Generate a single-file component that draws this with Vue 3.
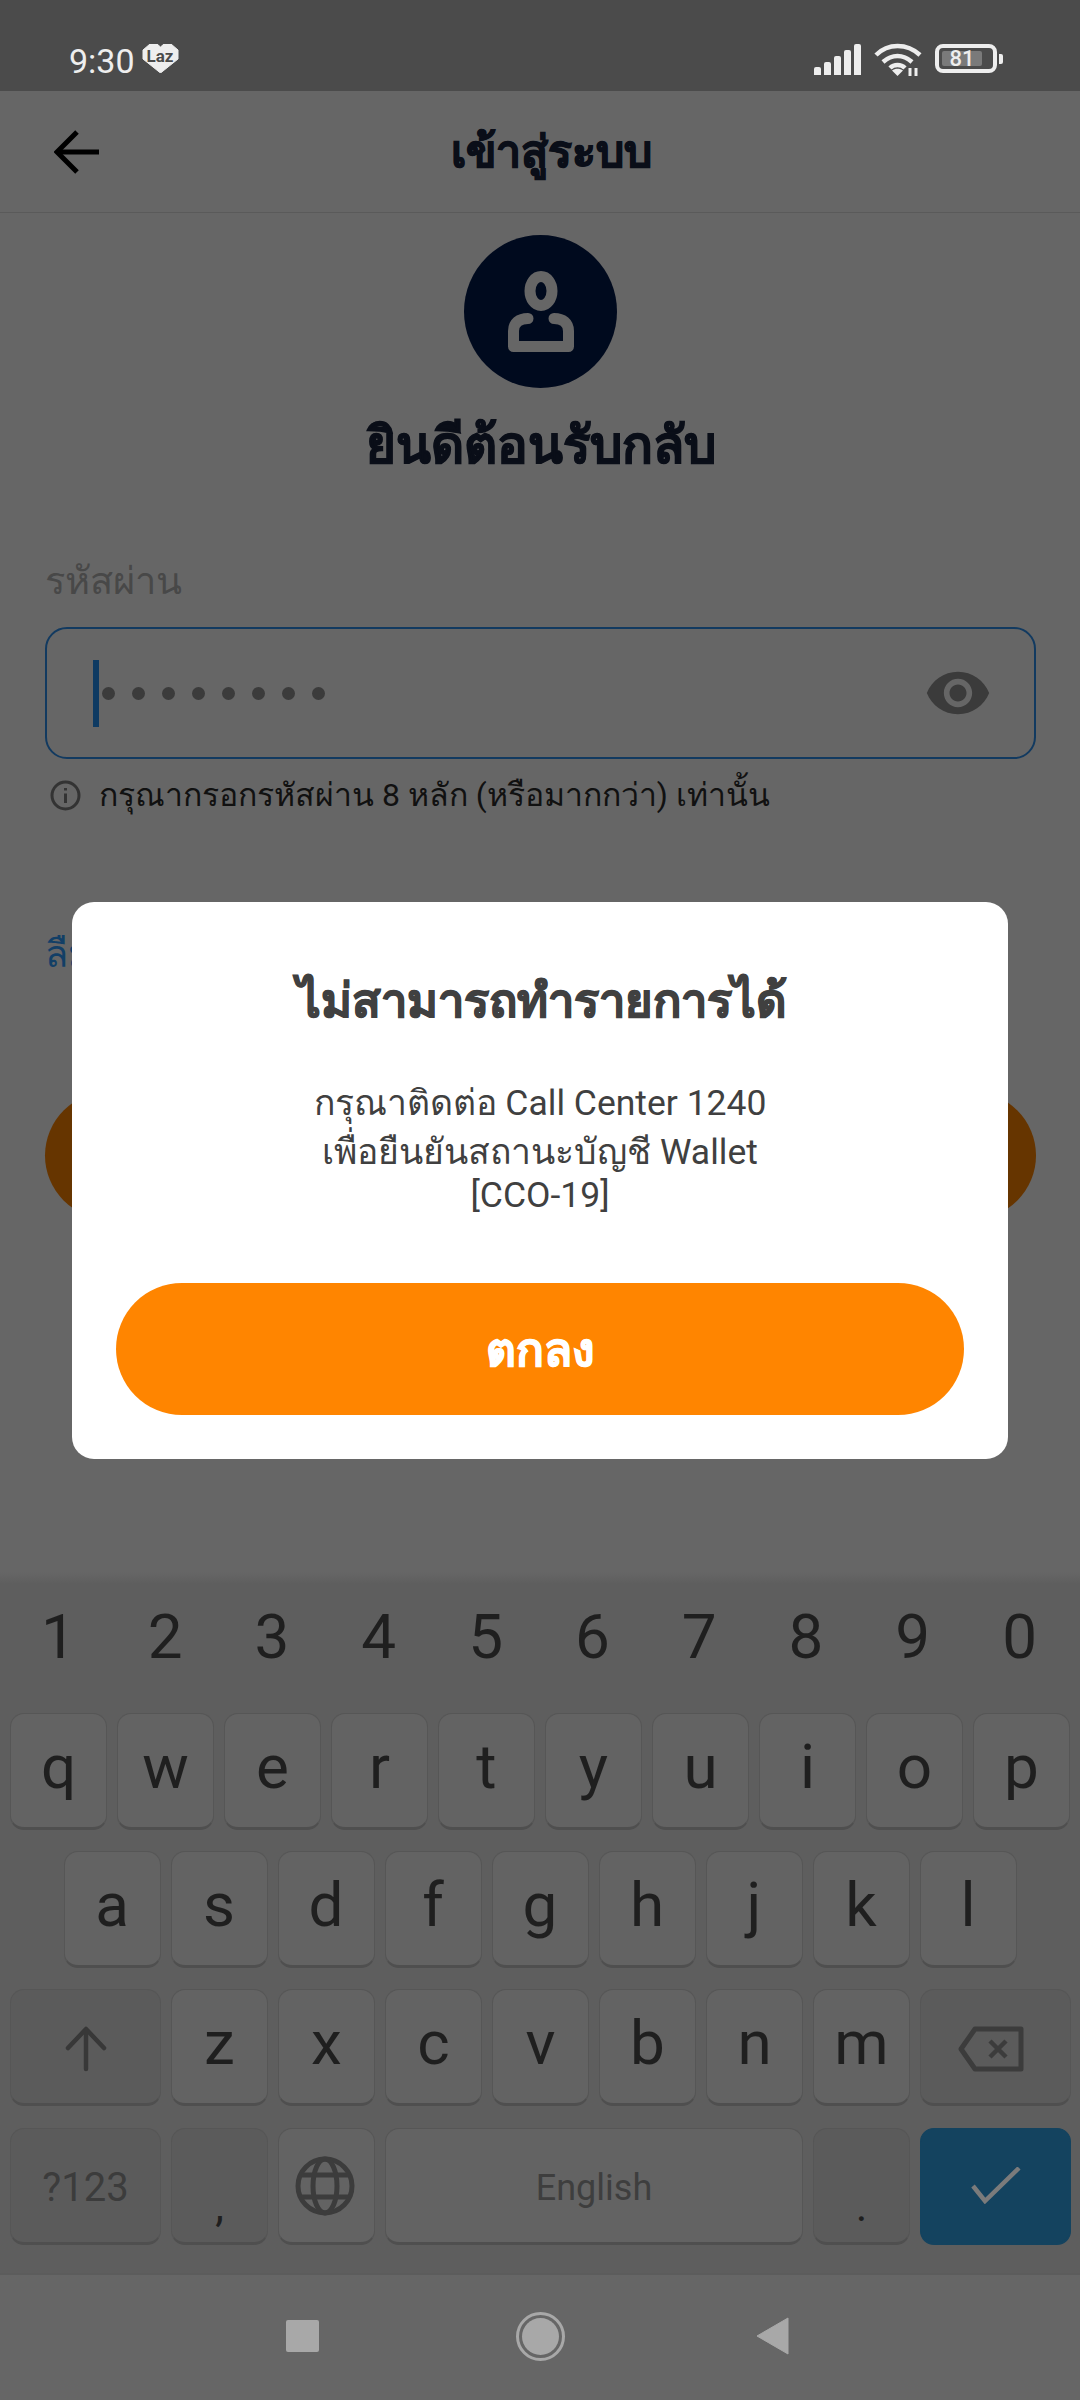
<template>
  <div class="screen">
    <div class="status-bar">
      <div class="status-left">
        <span class="time">9:30</span>
        <div class="laz">
          <svg width="37" height="29" viewBox="0 0 37 29"><path d="M1 6 L8 0 L15 0 L18.5 3 L22 0 L29 0 L36 6 V15 L18.5 29 L1 15 Z" fill="#eee" stroke="#eee" stroke-linejoin="round" /></svg>
          <span>Laz</span>
        </div>
      </div>
      <div class="status-right">
        <div class="signal">
          <i v-for="h in signalBars" :key="h" :style="{ height: h + 'px' }"></i>
        </div>
        <svg class="wifi" width="48" height="33" viewBox="0 0 48 33" fill="none" stroke="#eee" stroke-width="4.5">
          <path d="M2 12 C14 0 33 0 46 12" />
          <path d="M9 19 C18 11 29 11 38 19" />
          <path d="M16 25 C20 21 27 21 31 25" />
          <path d="M23.5 33 L18 27.5 C21 25 26 25 29 27.5 Z" fill="#eee" stroke="none" />
          <path d="M36 33 V25 M42 33 V25" stroke-width="3" />
        </svg>
        <div class="battery">
          <div class="battery-body">
            <div class="battery-fill"><span>81</span></div>
          </div>
          <div class="battery-tip"></div>
        </div>
      </div>
    </div>

    <header class="app-bar">
      <svg class="back" width="46" height="44" viewBox="0 0 46 44" fill="none" stroke="#000" stroke-width="5">
        <path d="M23 2 L3 22 L23 42" />
        <path d="M3 22 H45" />
      </svg>
      <h1>เข้าสู่ระบบ</h1>
    </header>

    <main class="content">
      <div class="avatar">
        <svg width="66" height="81" viewBox="0 0 66 81" fill="none" stroke="#666" stroke-width="11" stroke-linecap="round" stroke-linejoin="round">
          <ellipse cx="33" cy="20" rx="11" ry="14.5" />
          <path d="M20 47.5 C11 47.5 5.5 52 5.5 60 V75.5 H60.5 V60 C60.5 52 55 47.5 46 47.5" />
        </svg>
      </div>
      <h2 class="welcome">ยินดีต้อนรับกลับ</h2>

      <label class="field-label">รหัสผ่าน</label>
      <div class="field">
        <span class="caret"></span>
        <div class="dots">
          <i v-for="n in 8" :key="n"></i>
        </div>
        <svg class="eye" width="68" height="68" viewBox="0 0 24 24" fill="#3b3b3b">
          <path d="M12 4.5C7 4.5 2.73 7.61 1 12c1.73 4.39 6 7.5 11 7.5s9.27-3.11 11-7.5c-1.73-4.39-6-7.5-11-7.5zM12 17c-2.76 0-5-2.24-5-5s2.24-5 5-5 5 2.24 5 5-2.24 5-5 5zm0-8c-1.66 0-3 1.34-3 3s1.34 3 3 3 3-1.34 3-3-1.34-3-3-3z" />
        </svg>
      </div>
      <div class="hint">
        <svg width="31" height="31" viewBox="0 0 31 31" fill="none" stroke="#333" stroke-width="3">
          <circle cx="15.5" cy="15.5" r="13.5" />
          <path d="M15.5 13.5 V23" />
          <path d="M15.5 8 V10.5" />
        </svg>
        <span>กรุณากรอกรหัสผ่าน 8 หลัก (หรือมากกว่า) เท่านั้น</span>
      </div>

      <a class="forgot">ลืมรหัสผ่าน?</a>
      <div class="submit"></div>
    </main>

    <section class="keyboard">
      <div class="digits">
        <span v-for="d in digits" :key="d">{{ d }}</span>
      </div>
      <div class="key-row">
        <div v-for="k in row1" :key="k" class="key">{{ k }}</div>
      </div>
      <div class="key-row key-row--center">
        <div v-for="k in row2" :key="k" class="key">{{ k }}</div>
      </div>
      <div class="key-row key-row--third">
        <div class="key key--wide key--fn">
          <svg class="icon-shift" width="42" height="46" viewBox="0 0 42 46" fill="none" stroke="#383838" stroke-width="4.5" stroke-linecap="round" stroke-linejoin="round">
            <path d="M3 22 L21 3 L39 22" />
            <path d="M21 4 V43" />
          </svg>
        </div>
        <div v-for="k in row3" :key="k" class="key">{{ k }}</div>
        <div class="key key--wide key--fn">
          <svg class="icon-back" width="66" height="46" viewBox="0 0 66 46" fill="none" stroke="#3c3c3c" stroke-width="5" stroke-linejoin="round">
            <path d="M17 3 H63 V43 H17 L3 23 Z" />
            <path d="M32 15 L48 31 M48 15 L32 31" stroke-width="4.5" />
          </svg>
        </div>
      </div>
      <div class="key-row">
        <div class="key key--wide key--fn key--sym">?123</div>
        <div class="key key--fn key--punct">,</div>
        <div class="key key--plain">
          <svg class="icon-globe" width="60" height="60" viewBox="0 0 60 60" fill="none" stroke="#3c3c3c" stroke-width="5">
            <circle cx="30" cy="30" r="27" />
            <ellipse cx="30" cy="30" rx="12" ry="27" />
            <path d="M7 19 H53 M7 41 H53" />
          </svg>
        </div>
        <div class="key key--space key--plain">English</div>
        <div class="key key--fn key--punct">.</div>
        <div class="key key--wide key--enter key--plain">
          <svg width="50" height="37" viewBox="0 0 50 37" fill="none" stroke="#7b7b7b" stroke-width="4.5">
            <path d="M2 19 L14 34 L48 1" />
          </svg>
        </div>
      </div>
    </section>

    <nav class="nav-bar">
      <span class="nav-square"></span>
      <span class="nav-home"><i></i></span>
      <svg width="34" height="38" viewBox="0 0 34 38"><path d="M33 1 V37 L2 19 Z" fill="#a8a8a8" stroke="#a8a8a8" stroke-linejoin="round" /></svg>
    </nav>

    <div class="overlay">
      <div class="dialog">
        <h3>ไม่สามารถทำรายการได้</h3>
        <p class="line line--first">กรุณาติดต่อ Call Center 1240</p>
        <p class="line line--second">เพื่อยืนยันสถานะบัญชี Wallet</p>
        <p class="line line--third">[CCO-19]</p>
        <button class="ok">ตกลง</button>
      </div>
    </div>
  </div>
</template>

<script setup>
const signalBars = [8, 13, 19, 25, 31]
const digits = ['1', '2', '3', '4', '5', '6', '7', '8', '9', '0']
const row1 = ['q', 'w', 'e', 'r', 't', 'y', 'u', 'i', 'o', 'p']
const row2 = ['a', 's', 'd', 'f', 'g', 'h', 'j', 'k', 'l']
const row3 = ['z', 'x', 'c', 'v', 'b', 'n', 'm']
</script>

<style scoped>
.screen {
  position: relative;
  width: 1080px;
  height: 2400px;
  display: flex;
  flex-direction: column;
  overflow: hidden;
  background: #666;
  font-family: Roboto, "Noto Sans", "Liberation Sans", sans-serif;
}

.status-bar {
  height: 91px;
  flex: none;
  background: #4b4b4b;
  display: flex;
  justify-content: space-between;
  padding: 43px 77px 0 69px;
  box-sizing: border-box;
  color: #eee;
}
.status-left {
  display: flex;
  align-items: flex-start;
  gap: 7px;
}
.time {
  font-size: 34px;
  line-height: 36px;
}
.laz {
  position: relative;
  width: 37px;
  height: 29px;
  margin-top: 1px;
}
.laz span {
  position: absolute;
  top: 2px;
  left: 0;
  width: 37px;
  text-align: center;
  font-size: 17px;
  line-height: 20px;
  font-weight: 700;
  color: #4b4b4b;
}
.status-right {
  display: flex;
  align-items: flex-start;
  gap: 13px;
}
.signal {
  display: flex;
  align-items: flex-end;
  gap: 3px;
  height: 31px;
  margin-top: 1px;
}
.signal i {
  width: 7px;
  background: #eee;
  border-radius: 2px 2px 0 0;
}
.battery {
  display: flex;
  align-items: center;
  gap: 2px;
  margin-top: 1px;
}
.battery-body {
  width: 62px;
  height: 29px;
  border: 4px solid #eee;
  border-radius: 8px;
  box-sizing: border-box;
  padding: 3px;
}
.battery-fill {
  width: 40px;
  height: 15px;
  background: #7a7a7a;
  border-radius: 2px;
  display: flex;
  align-items: center;
  justify-content: center;
  font-size: 22px;
  font-weight: 500;
  color: #eee;
}
.battery-tip {
  width: 4px;
  height: 10px;
  background: #eee;
  border-radius: 0 2px 2px 0;
}

.app-bar {
  position: relative;
  height: 122px;
  flex: none;
  box-sizing: border-box;
  border-bottom: 1px solid #5a5a5a;
  display: flex;
  align-items: center;
  justify-content: center;
}
.app-bar .back {
  position: absolute;
  left: 54px;
  top: 39px;
}
.app-bar h1 {
  margin: 0 0 0 22px;
  font-size: 44.5px;
  font-weight: 700;
  color: #0a0e18;
  -webkit-text-stroke: 1px #0a0e18;
}

.content {
  flex: 1;
  display: flex;
  flex-direction: column;
  align-items: stretch;
  padding: 22px 44px 0 45px;
}
.avatar {
  width: 153px;
  height: 153px;
  border-radius: 50%;
  background: #000a1e;
  align-self: center;
  display: flex;
  align-items: center;
  justify-content: center;
}
.welcome {
  margin: 23px 0 0;
  text-align: center;
  font-size: 51px;
  line-height: 70px;
  font-weight: 700;
  color: #0a0e18;
  -webkit-text-stroke: 1px #0a0e18;
}
.field-label {
  margin-top: 75px;
  font-size: 38px;
  line-height: 50px;
  color: #484848;
}
.field {
  margin-top: 21px;
  height: 132px;
  box-sizing: border-box;
  border: 2px solid #123a60;
  border-radius: 22px;
  display: flex;
  align-items: center;
  padding: 0 42px 0 46px;
}
.caret {
  width: 6px;
  height: 67px;
  background: #0e3a62;
}
.dots {
  flex: 1;
  display: flex;
  gap: 17px;
  margin-left: 3px;
}
.dots i {
  width: 13px;
  height: 13px;
  border-radius: 50%;
  background: #3b3b3b;
}
.hint {
  margin-top: 16px;
  padding-left: 5px;
  display: flex;
  align-items: center;
  gap: 18px;
  font-size: 32px;
  line-height: 40px;
  color: #111;
}
.forgot {
  margin-top: 114px;
  font-size: 38px;
  line-height: 50px;
  color: #123f66;
}
.submit {
  margin-top: 113px;
  height: 127px;
  border-radius: 64px;
  background: #663500;
}

.keyboard {
  flex: none;
  height: 701px;
  box-sizing: border-box;
  padding: 0 10px;
  background: linear-gradient(#666 0, #5e5e5e 12px);
}
.digits {
  height: 141px;
  display: flex;
  margin-left: -5px;
  padding-top: 29px;
  box-sizing: border-box;
}
.digits span {
  width: 106.8px;
  flex: none;
  text-align: center;
  font-size: 62px;
  line-height: 72px;
  color: #1f1f1f;
}
.key-row {
  display: flex;
  gap: 10px;
  margin-bottom: 21px;
}
.key-row--center {
  justify-content: center;
}
.key-row--third {
  margin-bottom: 22px;
}
.key {
  flex: none;
  width: 97px;
  height: 117px;
  box-sizing: border-box;
  padding-bottom: 8px;
  background: #636363;
  border: 1px solid #565656;
  border-bottom: 3px solid #4f4f4f;
  border-radius: 14px;
  display: flex;
  align-items: center;
  justify-content: center;
  font-size: 62px;
  color: #1f1f1f;
}
.key--wide {
  width: 151px;
}
.key--fn {
  background: #5b5b5b;
}
.key--plain {
  padding-bottom: 0;
}
.key--sym {
  font-size: 40px;
  padding-bottom: 0;
  padding-top: 4px;
  color: #3c3c3c;
}
.key--punct {
  font-size: 44px;
  padding-top: 40px;
  padding-bottom: 0;
  color: #1f1f1f;
}
.key--space {
  width: 418px;
  font-size: 36px;
  padding-top: 4px;
  color: #3e3e3e;
}
.key--enter {
  background: #14435f;
  border-color: #14435f;
}
.icon-shift {
  margin-top: 13px;
}
.icon-back {
  margin: 12px 10px 0 0;
}
.icon-globe {
  margin-right: 3px;
}

.nav-bar {
  flex: none;
  height: 127px;
  background: #666;
  position: relative;
  display: flex;
  align-items: center;
  padding-left: 286px;
  padding-bottom: 3px;
  box-sizing: border-box;
  border-top: 2px solid #5c5c5c;
}
.nav-square {
  width: 33px;
  height: 32px;
  border-radius: 2px;
  background: #a8a8a8;
}
.nav-home {
  width: 49px;
  height: 49px;
  margin-left: 197px;
  margin-right: 190px;
  box-sizing: border-box;
  border: 3px solid #a8a8a8;
  border-radius: 50%;
  display: flex;
  align-items: center;
  justify-content: center;
}
.nav-home i {
  width: 37px;
  height: 37px;
  border-radius: 50%;
  background: #a8a8a8;
}

.overlay {
  position: absolute;
  inset: 0;
  padding-top: 902px;
  box-sizing: border-box;
  display: flex;
  justify-content: center;
  align-items: flex-start;
}
.dialog {
  width: 936px;
  height: 557px;
  box-sizing: border-box;
  background: #fff;
  border-radius: 22px;
  padding: 63px 44px 0;
  display: flex;
  flex-direction: column;
  align-items: center;
}
.dialog h3 {
  margin: 0 0 0 4px;
  font-size: 47px;
  line-height: 72px;
  font-weight: 700;
  color: #404040;
  -webkit-text-stroke: 1px #404040;
}
.line {
  margin: 0;
  font-size: 35.5px;
  color: #404040;
  text-align: center;
}
.line--first {
  margin-top: 43px;
  line-height: 46px;
}
.line--second {
  line-height: 46px;
  margin-top: 3px;
}
.line--third {
  line-height: 46px;
  margin-top: -3px;
}
.ok {
  margin-top: 65px;
  width: 848px;
  height: 132px;
  flex: none;
  border: none;
  border-radius: 66px;
  background: #ff8500;
  color: #fff;
  font-family: inherit;
  font-size: 46px;
  font-weight: 700;
  -webkit-text-stroke: 1px #fff;
}
</style>
